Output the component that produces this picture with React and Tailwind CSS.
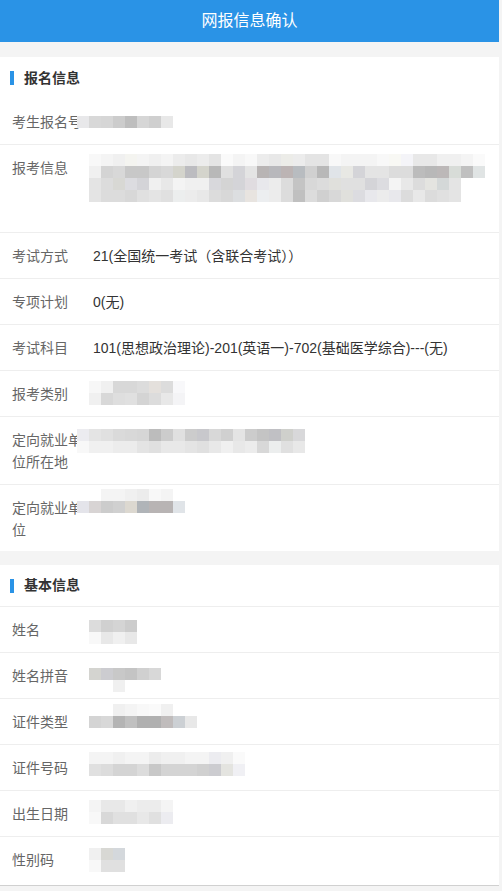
import React from 'react';

// 马赛克（打码）数据：每行一串颜色，格子 12px
const mosaics = {
  regNo: {
    x: -12, y: 5,
    rows: [['e8e8ea', 'd8d8d8', 'd6d6d6', 'cccccc', 'bebebe', 'd6d6d6', 'cfcfcf', 'e8e8e8']]
  },
  applyInfo: {
    x: 0, y: -3,
    rows: [
      ['f8f8f8', 'f4f4f4', 'f0f0f0', 'f4f4f0', 'f4f4f4', 'f0f0f0', 'f4f4f4', 'ececec', 'e8e8e8', 'ececec', 'e4e4e4', 'fafafa', 'f4f4f4', 'f8f8f8', 'ececec', 'e8e8e8', 'ecece8', 'ececec', 'e4e4e4', 'e4e4e4', 'f8f8f8', 'f4f4f4', 'f4f4f4', 'f4f4f4', 'f8f8f8', 'f8f8f4', 'f4f4f8', 'e8e8e8', 'e8e8e8', 'f0f0f0', 'f0f0f0', 'f4f4f4', 'fafafa'],
      ['f0f0f0', 'd4d4d4', 'd8d8d8', 'c8c8c8', 'c8c8c8', 'd4d4d4', 'd8d8d8', 'd4d4cc', 'bcbcc0', 'd4d4cc', 'b8b8b8', 'e0e0e0', 'd4d4d8', 'e4e4e4', 'b8b4b4', 'b8b8bc', 'bcb4b4', 'b8bcc0', 'd0d0d0', 'b8b8b8', 'e0e4e8', 'e8e8e4', 'd4d4d8', 'e4e4e4', 'e4e4e4', 'dcdcdc', 'dcdcdc', 'bcbcbc', 'b8b8b8', 'bcb8b8', 'd8dcd8', 'c0c0c0', 'e0e4e4'],
      ['e4e4e4', 'dcdcdc', 'd8d8d4', 'dcdce0', 'd4d4d8', 'f0f0f0', 'e8e8e8', 'f4f4f4', 'f0f0f0', 'f0f0f0', 'd8d8dc', 'd4d4d4', 'd4d4d8', 'e0dce0', 'e8e8ec', 'ececec', 'dcdcdc', 'c4c4c4', 'd8d8d8', 'dcdcdc', 'e0e0dc', 'e0e0e0', 'e0e0e0', 'd4d4d8', 'dcdce0', 'f4f4f4', 'e8e8e8', 'dcdcdc', 'e4e4e0', 'd4d8d8', 'e4e4e4'],
      ['e4e4e4', 'dcdcdc', 'dcdcdc', 'd8d8d8', 'e0e0e0', 'e4e4e4', 'e0e0e0', 'eceeee', 'ececec', 'e8e8e8', 'dcdcdc', 'd8d8d8', 'dcdee0', 'e8e4e0', 'eceef0', 'ececec', 'dcdcdc', 'c0c0c0', 'dcdcdc', 'd0d0d0', 'd8d8d8', 'e0e0dc', 'dcdce0', 'e8e8ec', 'ececec', 'e8e8ec', 'dcdcdc', 'e8e8e8', 'dcdcdc', 'e0e0e0', 'e4e4e4']
    ]
  },
  category: {
    x: 0, y: -2,
    rows: [
      ['f7f7f7', 'f0f0f0', 'd8d8d8', 'd8d8d8', 'dcdcdc', 'e4e0dc', 'dcdcdc', 'f8f8fa'],
      ['f0f0f0', 'd8d8d8', 'dedede', 'e0e0e0', 'd4d4d4', 'dcdcdc', 'e8e8e8', 'f4f4f6']
    ]
  },
  jobPlace: {
    x: -12, y: 0,
    rows: [
      ['ececf0', 'e4e4e4', 'e0e0e0', 'dadada', 'd8d8d8', 'd6d6d6', 'bcbcbc', 'cccccc', 'e0e0e0', 'cccccc', 'c8c8cc', 'd8d8d8', 'd0d0d0', 'e4e4e4', 'cccccc', 'c4c4c4', 'c0c0c4', 'cfd0cc', 'd8d8da'],
      ['f8f8f8', 'f0f0f0', 'f0f0f0', 'ececec', 'ececec', 'e4e4e4', 'e0e0e0', 'e8e8e8', 'e8e8e8', 'e4e4e4', 'e0e0e0', 'e8e8e8', 'f0f0f0', 'e8e8e8', 'ececec', 'd8d8d8', 'eceeee', 'e0e0e0', 'e8e8e8']
    ]
  },
  jobUnit: {
    x: -12, y: -8,
    rows: [
      ['ffffff', 'ffffff', 'f4f4f4', 'f4f4f4', 'f0f0f0', 'ececec', 'f8f8f8', 'f4f4f4', 'ffffff'],
      ['e4e4ea', 'd8d4d4', 'cccccc', 'd0d0d0', 'dcd8d0', 'b0b4b8', 'b8b4b4', 'b8b4b4', 'e0e4e8']
    ]
  },
  name: {
    x: 0, y: 1,
    rows: [
      ['dcdcdc', 'd0d0d0', 'd4d4d4', 'cccccc'],
      ['f8f8f8', 'e8e8e8', 'f0f0f0', 'e8e8e8']
    ]
  },
  pinyin: {
    x: 0, y: 3,
    rows: [
      ['d4d4d0', 'ccccd0', 'c8c8c8', 'c4c4c4', 'd0d0d0', 'd8d8d8'],
      ['ffffff', 'ffffff', 'f0f0f0', 'ffffff', 'ffffff', 'ffffff']
    ]
  },
  idType: {
    x: 0, y: -7,
    rows: [
      ['ffffff', 'ffffff', 'f0f0f0', 'f4f4f4', 'f8f8f8', 'fafafa', 'f0f0f0', 'ffffff', 'ffffff'],
      ['d4d4d4', 'd8d8d8', 'b4b4b4', 'c0c0c0', 'b0b0b0', 'b0b0b0', 'c0bcbc', 'ccd0d4', 'e8e8e8']
    ]
  },
  idNo: {
    x: 0, y: -5,
    rows: [
      ['f4f4f4', 'f4f4f4', 'f0f0f0', 'f4f4f4', 'f4f4f4', 'ececec', 'f0f0f0', 'f0f0f0', 'f4f4f4', 'f4f4f4', 'ececf0', 'f0f0f0', 'fafafa'],
      ['e0e0e0', 'dcdcdc', 'd4d4d4', 'd4d4d4', 'dcdcdc', 'c8c8c8', 'd4d4d4', 'd4d4d4', 'd4d4d4', 'd0d0d0', 'ccccd0', 'e4e4e0', 'f0f0f4']
    ]
  },
  birth: {
    x: 0, y: -3,
    rows: [
      ['f4f4f4', 'e8e8e8', 'e8e8e8', 'f0f0f0', 'ececec', 'ececec', 'f4f4f4'],
      ['f8f8f8', 'd8d8d8', 'e0e0e0', 'e0e0e0', 'e8e8e8', 'e0e0e0', 'ececf0']
    ]
  },
  gender: {
    x: 0, y: -1,
    rows: [
      ['f0f0f0', 'd8d8d4', 'd4d8dc'],
      ['f8f8f8', 'e0e0e0', 'e0e0e0']
    ]
  }
};

function Mosaic({ data }) {
  return (
    <div className="absolute" style={{ left: data.x, top: data.y }}>
      {data.rows.map((row, i) => (
        <div key={i} className="flex">
          {row.map((c, j) => (
            <div key={j} className="w-[12px] h-[12px]" style={{ backgroundColor: '#' + c }} />
          ))}
        </div>
      ))}
    </div>
  );
}

// h: 行总高度（含底边框）
function Row({ label, value, mosaic, h = 'h-[46px]', border = 'border-b border-[#eeeeee]' }) {
  return (
    <div className={`flex px-[12px] pt-[12px] leading-[22px] text-[14px] ${h} ${border}`}>
      <div className="w-[77px] shrink-0 text-[#666666]">{label}</div>
      <div className="relative flex-1 text-[#333333]">
        {value && <span className="pl-[4px] whitespace-nowrap">{value}</span>}
        {mosaic && <Mosaic data={mosaic} />}
      </div>
    </div>
  );
}

function SectionTitle({ title, border }) {
  return (
    <div className={`flex items-center h-[42px] pl-[10px] ${border ? 'border-b border-[#eeeeee]' : ''}`}>
      <span className="w-[4px] h-[14px] bg-[#2a93e6]" />
      <span className="ml-[10px] text-[14px] font-bold text-[#333333]">{title}</span>
    </div>
  );
}

export default function App() {
  return (
    <div className="min-h-screen bg-[#f4f4f4]" style={{ fontFamily: '"Liberation Sans", "Noto Sans CJK SC", sans-serif' }}>
      <div className="w-[499px]">
        <div className="h-[42px] bg-[#2a93e6] flex items-center justify-center text-white text-[16px]">
          网报信息确认
        </div>

        <div className="mt-[15px] bg-white">
          <SectionTitle title="报名信息" />
          <Row label="考生报名号" mosaic={mosaics.regNo} />
          <Row label="报考信息" mosaic={mosaics.applyInfo} h="h-[88px]" />
          <Row label="考试方式" value="21(全国统一考试（含联合考试））" />
          <Row label="专项计划" value="0(无)" />
          <Row label="考试科目" value="101(思想政治理论)-201(英语一)-702(基础医学综合)---(无)" />
          <Row label="报考类别" mosaic={mosaics.category} />
          <Row label="定向就业单位所在地" mosaic={mosaics.jobPlace} h="h-[68px]" />
          <Row label="定向就业单位" mosaic={mosaics.jobUnit} h="h-[66px]" border="" />
        </div>

        <div className="mt-[14px] bg-white">
          <SectionTitle title="基本信息" border />
          <Row label="姓名" mosaic={mosaics.name} />
          <Row label="姓名拼音" mosaic={mosaics.pinyin} />
          <Row label="证件类型" mosaic={mosaics.idType} />
          <Row label="证件号码" mosaic={mosaics.idNo} />
          <Row label="出生日期" mosaic={mosaics.birth} />
          <Row label="性别码" mosaic={mosaics.gender} h="h-[49px]" border="border-b border-[#d0d0d0]" />
        </div>
      </div>
    </div>
  );
}
